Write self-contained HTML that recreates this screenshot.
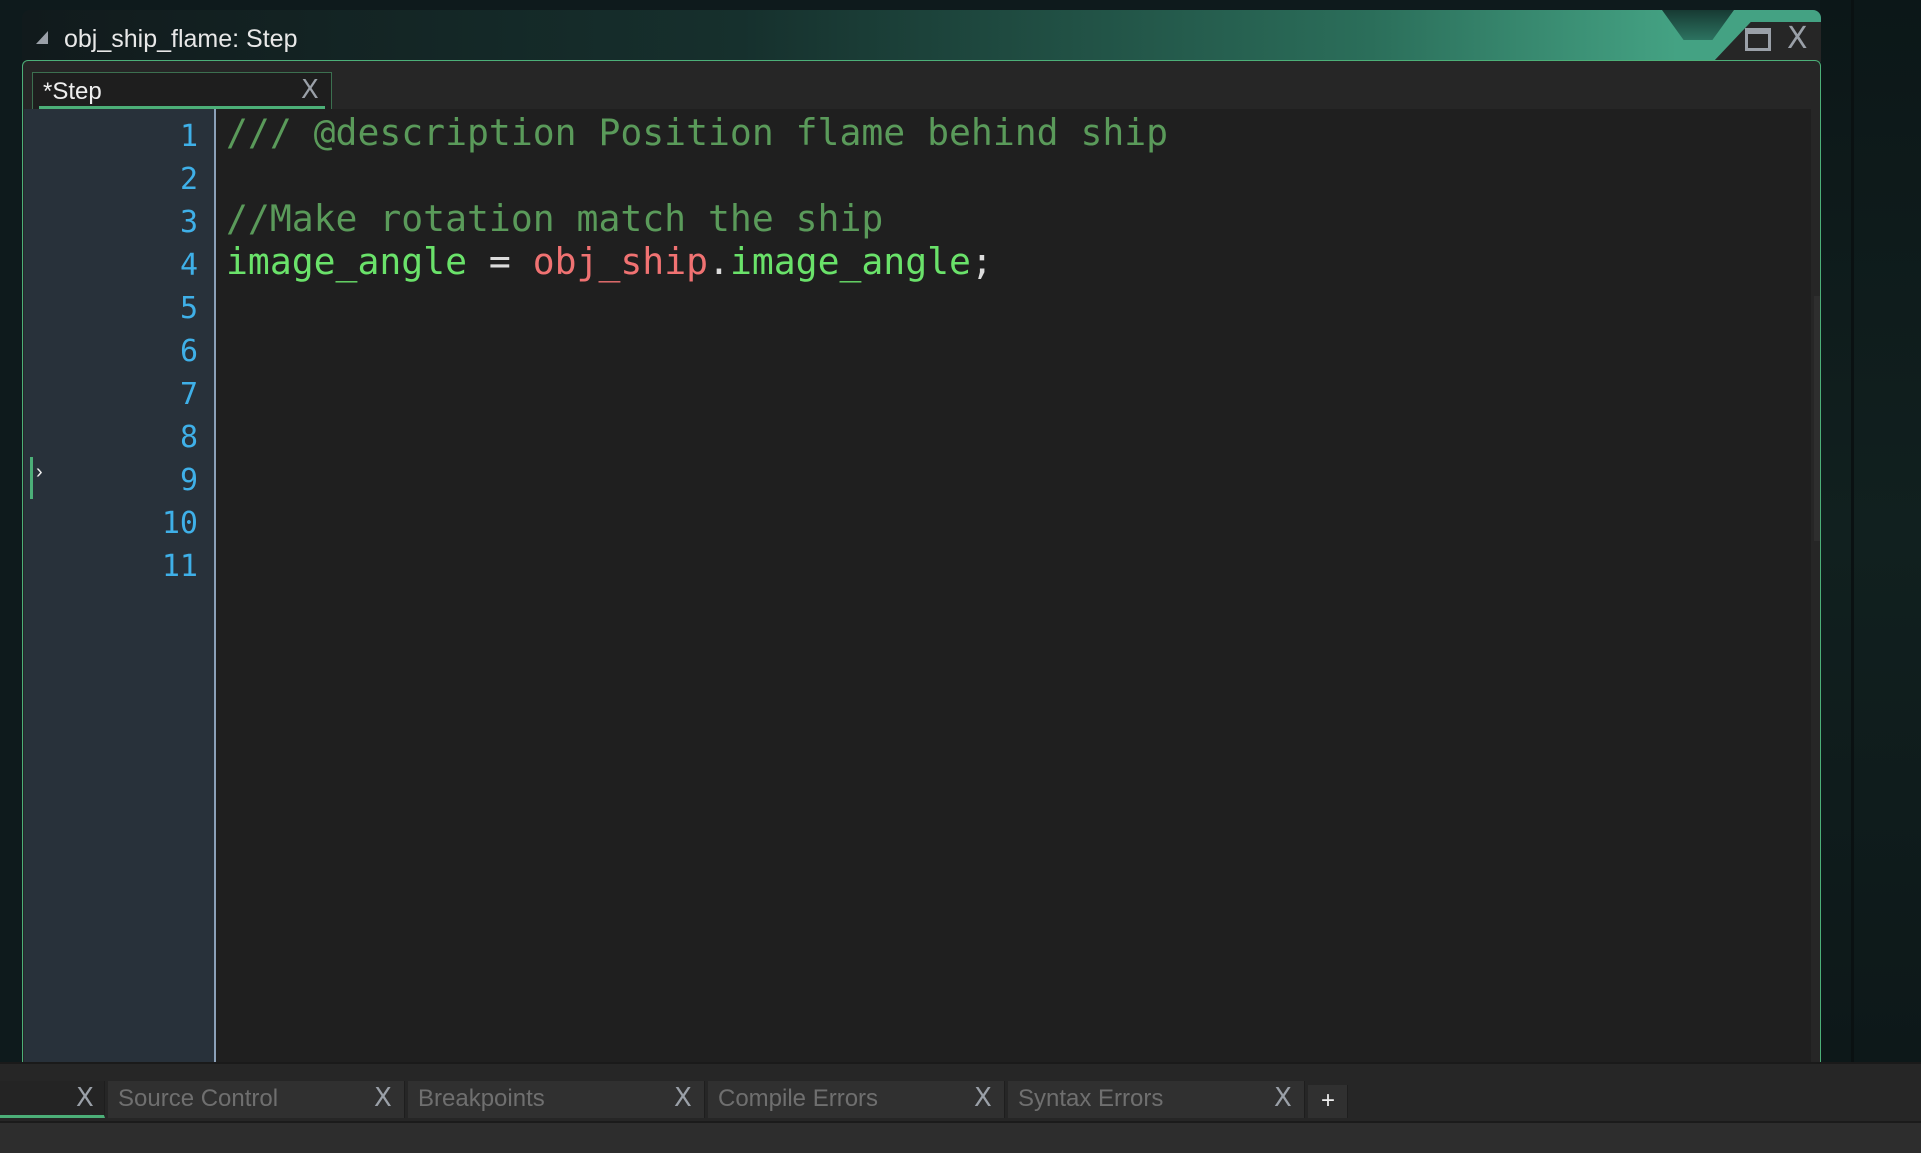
<!DOCTYPE html>
<html><head><meta charset="utf-8"><style>
*{margin:0;padding:0;box-sizing:border-box}
body{width:1921px;height:1151px;overflow:hidden;background:#0e1a1c;position:relative;font-family:"Liberation Sans",sans-serif}
.bgr{position:absolute;left:1820px;top:0;width:101px;height:1062px;background:linear-gradient(180deg,#0c1718,#11201f 50%,#0d1819)}
.vline{position:absolute;left:1851px;top:0;width:3px;height:1062px;background:#0a1112}
.win{position:absolute;left:22px;top:10px;width:1799px;height:1052px;border-radius:8px 8px 0 0;overflow:hidden}
.title{position:absolute;left:0;top:0;width:100%;height:52px;background:linear-gradient(90deg,#111a1c 0%,#16302d 40%,#2b6e5a 75%,#44a283 92%)}
.title .t{position:absolute;left:42px;top:15px;color:#e8e8e8;font-size:25px}
.tri{position:absolute;left:14px;top:21px;width:0;height:0;border-left:12px solid transparent;border-bottom:13px solid #9aa0a8}
.corner{position:absolute;right:0;top:12px;width:108px;height:40px;background:#262626;clip-path:polygon(35% 0,100% 0,100% 100%,0 100%)}
.notch{position:absolute;left:1640px;top:0;width:72px;height:30px;background:linear-gradient(#173a33,#2c7360);clip-path:polygon(0 0,100% 0,70% 100%,30% 100%)}
.panel{position:absolute;left:0;top:50px;width:100%;height:1002px;background:#262626;border:1px solid #4caf78;border-bottom:none;border-radius:6px 6px 0 0}
.tab{position:absolute;left:9px;top:11px;width:300px;height:37px;background:#1e1e1e;border:1px solid #3c7050;border-bottom:none}
.tab span{position:absolute;left:10px;top:5px;color:#eee;font-size:24px}
.tab .ul{position:absolute;left:6px;right:6px;bottom:0;height:3px;background:#4caf78}
.x{position:absolute;color:#9aa0a8;font-size:26px;font-family:"DejaVu Sans",sans-serif}
.editor{position:absolute;left:1px;top:48px;width:1787px;height:954px;background:#1f1f1f}
.gutter{position:absolute;left:0;top:0;width:192px;height:100%;background:#28313a;border-right:2px solid #8ba0b8}
.ln{position:absolute;right:16px;color:#3fb0e8;font:30px "DejaVu Sans Mono",monospace}
.code{position:absolute;left:202px;font:36.4px "DejaVu Sans Mono",monospace;white-space:pre}
.c{color:#5a9a5a}.g{color:#6ae26a}.r{color:#f07272}.w{color:#dcdcdc}
.bot{position:absolute;left:0;top:1062px;width:1921px;height:89px;background:#262626;border-top:2px solid #1a1a1a}
.bt{position:absolute;top:17px;height:37px;background:#303030;border-right:1px solid #1e1e1e}
.bt span{position:absolute;left:10px;top:4px;color:#6f6f6f;font-size:24px}
.low{position:absolute;left:0;top:57px;width:100%;height:32px;background:#2d2d2d;border-top:2px solid #1b1b1b}
</style></head><body>
<div class="bgr"></div><div class="vline"></div>
<div class="win">
 <div class="title"><div class="tri"></div><div class="t">obj_ship_flame: Step</div></div>
 <div class="notch"></div>
 <div class="corner"></div>
 <div style="position:absolute;left:1723px;top:18px;width:26px;height:23px;border:3px solid #9aa0a8;border-top-width:6px"></div>
 <div class="x" style="left:1765px;top:11px;font-size:30px">X</div>
 <div class="panel">
  <div class="tab"><span>*Step</span><div class="x" style="left:268px;top:2px">X</div><div class="ul"></div></div>
  <div class="editor">
   <div class="gutter">
    <div class="ln" style="top:10px">1</div><div class="ln" style="top:53px">2</div><div class="ln" style="top:96px">3</div><div class="ln" style="top:139px">4</div><div class="ln" style="top:182px">5</div><div class="ln" style="top:225px">6</div><div class="ln" style="top:268px">7</div><div class="ln" style="top:311px">8</div><div class="ln" style="top:354px">9</div><div class="ln" style="top:397px">10</div><div class="ln" style="top:440px">11</div>
    <div style="position:absolute;left:6px;top:348px;width:3px;height:42px;background:#4caf78"></div>
    <div style="position:absolute;left:12px;top:352px;color:#eee;font-size:20px">›</div>
   </div>
   <div class="code c" style="top:2px">/// @description Position flame behind ship</div>
   <div class="code c" style="top:88px">//Make rotation match the ship</div>
   <div class="code" style="top:131px"><span class="g">image_angle</span><span class="w"> = </span><span class="r">obj_ship</span><span class="w">.</span><span class="g">image_angle</span><span class="w">;</span></div>
  </div>
  <div style="position:absolute;right:0;top:235px;width:6px;height:245px;background:#2e2e2e"></div>
 </div>
</div>
<div class="bot">
 <div class="bt" style="left:0;width:105px;background:#242424;border-bottom:3px solid #4caf78"><div class="x" style="left:76px;top:2px">X</div></div>
 <div class="bt" style="left:108px;width:297px"><span>Source Control</span><div class="x" style="left:266px;top:2px">X</div></div>
 <div class="bt" style="left:408px;width:297px"><span>Breakpoints</span><div class="x" style="left:266px;top:2px">X</div></div>
 <div class="bt" style="left:708px;width:297px"><span>Compile Errors</span><div class="x" style="left:266px;top:2px">X</div></div>
 <div class="bt" style="left:1008px;width:297px"><span>Syntax Errors</span><div class="x" style="left:266px;top:2px">X</div></div>
 <div class="bt" style="left:1308px;width:40px;top:21px;height:33px"><span style="color:#eee;left:13px;top:2px">+</span></div>
 <div class="low"></div>
</div>
</body></html>
